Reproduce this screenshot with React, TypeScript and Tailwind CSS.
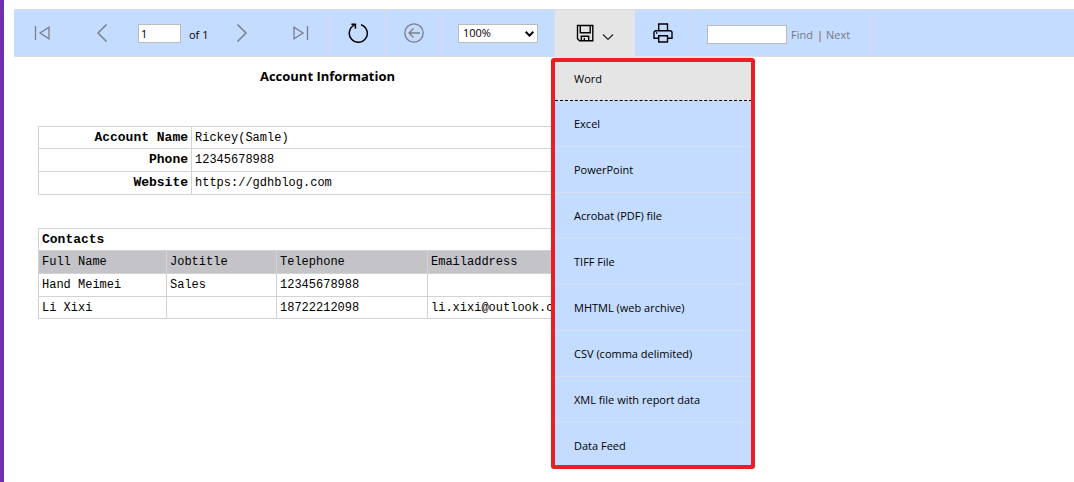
import { useState } from "react";
import type { ReactNode } from "react";

const EXPORT_FORMATS = [
  "Word",
  "Excel",
  "PowerPoint",
  "Acrobat (PDF) file",
  "TIFF File",
  "MHTML (web archive)",
  "CSV (comma delimited)",
  "XML file with report data",
  "Data Feed",
];

const ACCOUNT = [
  { label: "Account Name", value: "Rickey(Samle)" },
  { label: "Phone", value: "12345678988" },
  { label: "Website", value: "https://gdhblog.com" },
];

const CONTACTS = [
  { name: "Hand Meimei", job: "Sales", phone: "12345678988", email: "" },
  { name: "Li Xixi", job: "", phone: "18722212098", email: "li.xixi@outlook.com" },
];

type ToolButtonProps = {
  label: string;
  className?: string;
  onClick?: () => void;
  children: ReactNode;
};

function ToolButton({ label, className = "", onClick, children }: ToolButtonProps) {
  return (
    <button
      type="button"
      aria-label={label}
      title={label}
      onClick={onClick}
      className={`flex w-14 shrink-0 items-center justify-center ${className}`}
    >
      {children}
    </button>
  );
}

type IconProps = {
  w: number;
  h: number;
  color?: string;
  stroke?: number;
  className?: string;
  children: ReactNode;
};

function Icon({ w, h, color = "#7b7f87", stroke = 1.4, className, children }: IconProps) {
  return (
    <svg
      width={w}
      height={h}
      viewBox={`0 0 ${w} ${h}`}
      fill="none"
      stroke={color}
      strokeWidth={stroke}
      className={className}
      aria-hidden="true"
    >
      {children}
    </svg>
  );
}

function ExportMenu() {
  return (
    <div className="absolute top-full left-0 z-10 w-[197px] bg-[#c4dcff]">
      <ul role="menu">
        {EXPORT_FORMATS.map((format, i) => (
          <li key={format} role="none">
            <button
              type="button"
              role="menuitem"
              className={`block w-full pl-[19px] text-left ${
                i === 0
                  ? "h-[45px] border-b border-dashed border-black bg-[#e5e5e5] pt-0.5"
                  : i === EXPORT_FORMATS.length - 1
                    ? "h-[43px] pt-0.5"
                    : "h-[46px] border-b border-[#d9dfe8]"
              }`}
            >
              {format}
            </button>
          </li>
        ))}
      </ul>
      <div className="pointer-events-none absolute top-0.5 -right-[3px] -bottom-[3px] -left-1 rounded-[3px] border-4 border-[#ee1c25]" />
    </div>
  );
}

function Toolbar() {
  const [page, setPage] = useState("1");
  const [search, setSearch] = useState("");
  const [menuOpen, setMenuOpen] = useState(true);

  return (
    <div className="flex h-12 border-y border-[#d9dde3] bg-[#c4dcff]">
      <div className="flex items-center border-r border-[#d9dde3]">
        <ToolButton label="First Page" className="mr-1">
          <Icon w={16} h={16} stroke={1.3}>
            <path d="M1.5 1v14M15 2.2v11.6L6 8z" />
          </Icon>
        </ToolButton>
        <ToolButton label="Previous Page">
          <Icon w={12} h={20} stroke={1.5}>
            <path d="M10.5 1.5L2 10l8.5 8.5" />
          </Icon>
        </ToolButton>
        <input
          aria-label="Current Page"
          value={page}
          onChange={(e) => setPage(e.target.value)}
          className="ml-2 h-[19px] w-[43px] border border-[#bbbbbb] bg-white px-0.5"
        />
        <span className="ml-2 w-[25px] pt-1 whitespace-nowrap">of 1</span>
        <ToolButton label="Next Page" className="mr-[3px]">
          <Icon w={12} h={20} stroke={1.5}>
            <path d="M1.5 1.5L10 10l-8.5 8.5" />
          </Icon>
        </ToolButton>
        <ToolButton label="Last Page">
          <Icon w={16} h={16} stroke={1.3}>
            <path d="M14.5 1v14M1 2.2v11.6L10 8z" />
          </Icon>
        </ToolButton>
      </div>

      <ToolButton label="Refresh" className="border-r border-[#d9dde3]">
        <Icon w={20} h={20} color="#000" stroke={1.5}>
          <path d="M13 1.7A9 9 0 1 1 6.3 2.2M3.4 1.2h4v4.6" />
        </Icon>
      </ToolButton>
      <ToolButton label="Back" className="border-r border-[#d9dde3]">
        <Icon w={20} h={20} stroke={1.3}>
          <circle cx="10" cy="10" r="9.2" />
          <path d="M16 10H5M9.5 5.5L5 10l4.5 4.5" />
        </Icon>
      </ToolButton>

      <div className="flex items-center border-r border-[#d9dde3] px-4">
        <div className="relative">
          <select
            aria-label="Zoom"
            defaultValue="100%"
            className="block h-[19px] w-20 appearance-none border border-[#bbbbbb] bg-white pl-1"
          >
            <option>50%</option>
            <option>100%</option>
            <option>200%</option>
          </select>
          <svg
            width="9"
            height="6"
            viewBox="0 0 9 6"
            fill="none"
            stroke="#000"
            strokeWidth="2"
            className="pointer-events-none absolute top-[7px] right-1"
            aria-hidden="true"
          >
            <path d="M.7 .8l3.8 3.8L8.3 .8" />
          </svg>
        </div>
      </div>

      <div className="relative">
        <button
          type="button"
          aria-label="Export"
          aria-expanded={menuOpen}
          onClick={() => setMenuOpen(!menuOpen)}
          className="flex h-full w-20 items-center justify-center gap-2 bg-[#e5e5e5]"
        >
          <Icon w={18} h={18} color="#000" stroke={1.4}>
            <path d="M1.5 1.5h15.3v15.3H3.5l-2-2z" />
            <path d="M4.3 1.5v7.2h9.9V1.5M5.3 16.8v-4.6h7.4v4.6M8.3 14v2.8" />
          </Icon>
          <Icon w={12} h={8} color="#222" stroke={1.2} className="mt-2">
            <path d="M1 1.5l5 5 5-5" />
          </Icon>
        </button>
        {menuOpen && <ExportMenu />}
      </div>
      <ToolButton label="Print" className="border-r border-[#d9dde3]">
        <Icon w={20} h={20} color="#000" stroke={1.4}>
          <path d="M5.7 7.7V1h8.8v6.7" />
          <path d="M5.7 15.3H1V9l1.3-1.3h15.4L19 9v6.3h-4.5" />
          <path d="M5.7 12.7h8.8V19H5.7zM3 10h1.4" />
        </Icon>
      </ToolButton>

      <div className="flex items-center border-r border-[#d9dde3] pr-5 pl-4 text-[#777b82]">
        <input
          aria-label="Find Text in Report"
          value={search}
          onChange={(e) => setSearch(e.target.value)}
          className="mt-0.5 h-[19px] w-20 border border-[#bbbbbb] bg-white px-0.5 text-black"
        />
        <a href="#find" className="ml-1 pt-1">
          Find
        </a>
        <span className="ml-1 pt-1 text-[#8c4a3c]">|</span>
        <a href="#next" className="ml-[3px] pt-1">
          Next
        </a>
      </div>
    </div>
  );
}

const cell = "border border-[#d3d3d3] px-[3px] text-left whitespace-nowrap";

function Report() {
  return (
    <div className="ml-6 w-[579px]">
      <h1 className="pt-[9px] text-center text-[13px] leading-5 font-bold">Account Information</h1>

      <table className="mt-10 w-full table-fixed border-collapse font-['Liberation_Mono',monospace] text-[12px] leading-4">
        <tbody>
          {ACCOUNT.map((row, i) => (
            <tr key={row.label} className={i === 0 ? "h-[22px]" : "h-[23px]"}>
              <th
                scope="row"
                className="w-[153px] border border-[#d3d3d3] px-[3px] text-right text-[13px] font-bold"
              >
                {row.label}
              </th>
              <td className={cell}>{row.value}</td>
            </tr>
          ))}
        </tbody>
      </table>

      <table className="mt-[33px] w-full table-fixed border-collapse font-['Liberation_Mono',monospace] text-[12px] leading-4">
        <colgroup>
          <col className="w-32" />
          <col className="w-[110px]" />
          <col className="w-[151px]" />
          <col />
        </colgroup>
        <thead>
          <tr className="h-[22px]">
            <th colSpan={4} className={`${cell} text-[13px] font-bold`}>
              Contacts
            </th>
          </tr>
          <tr className="h-[23px] bg-[#c3c3c8]">
            <th className={`${cell} font-normal`}>Full Name</th>
            <th className={`${cell} font-normal`}>Jobtitle</th>
            <th className={`${cell} font-normal`}>Telephone</th>
            <th className={`${cell} font-normal`}>Emailaddress</th>
          </tr>
        </thead>
        <tbody>
          {CONTACTS.map((c, i) => (
            <tr key={c.name} className={i === CONTACTS.length - 1 ? "h-[22px]" : "h-[23px]"}>
              <td className={cell}>{c.name}</td>
              <td className={cell}>{c.job}</td>
              <td className={cell}>{c.phone}</td>
              <td className={cell}>{c.email}</td>
            </tr>
          ))}
        </tbody>
      </table>
    </div>
  );
}

export default function App() {
  return (
    <main className="min-h-screen border-l-4 border-[#7030a9] bg-white pt-[9px] pl-2.5 font-['Open_Sans','Noto_Sans',sans-serif] text-[11px] leading-4 text-black">
      <Toolbar />
      <Report />
    </main>
  );
}
